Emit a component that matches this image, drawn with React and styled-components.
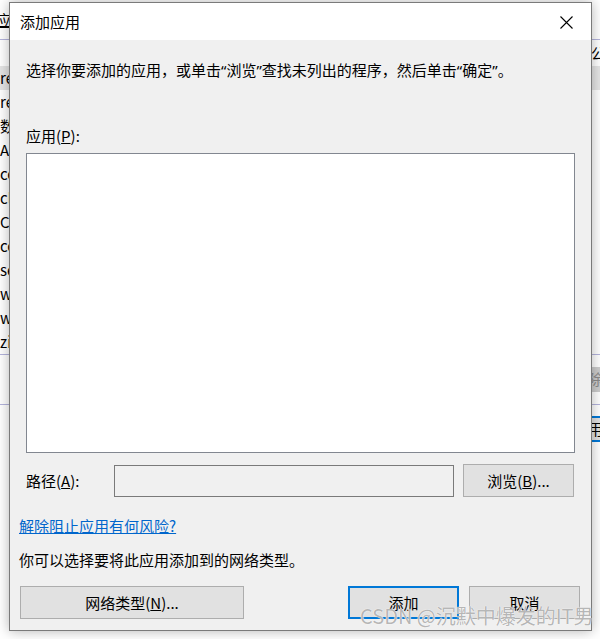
import styled, { createGlobalStyle } from "styled-components";

const GlobalStyle = createGlobalStyle`
  html, body {
    margin: 0;
    padding: 0;
    background: #ffffff;
  }
  body {
    font-family: "Noto Sans CJK SC", "Noto Sans", sans-serif;
    font-size: 15px;
    color: #000;
  }
`;

const backRows = ["re", "re", "数", "A", "co", "cl", "C", "co", "se", "w", "w", "zi"];

const App = () => {
  return (
    <>
      <GlobalStyle />
      <Screen>
        <BackWindow>
          <BackHeader>
            <BackTab>应</BackTab>
          </BackHeader>
          <BackTopRow>
            <BackRightText>公</BackRightText>
          </BackTopRow>
          <BackList>
            {backRows.map((r, i) => (
              <BackRow key={i} $selected={i === 0}>{r}</BackRow>
            ))}
          </BackList>
          <BackSection>
            <BackGrayBtn>除</BackGrayBtn>
          </BackSection>
          <BackFooter>
            <BackBlueBtn>用</BackBlueBtn>
          </BackFooter>
        </BackWindow>

        <Dialog>
          <TitleBar>
            <Title>添加应用</Title>
            <CloseBtn>
              <svg width="13" height="13" viewBox="0 0 13 13">
                <path d="M0.5 0.5 L12.5 12.5 M12.5 0.5 L0.5 12.5" stroke="#000" strokeWidth="1.1" fill="none" />
              </svg>
            </CloseBtn>
          </TitleBar>
          <Body>
            <Instruction>
              选择你要添加的应用，或单击<Quote>“</Quote>浏览<Quote>”</Quote>查找未列出的程序，然后单击<Quote>“</Quote>确定<Quote>”</Quote>。
            </Instruction>
            <FieldLabel>应用(<u>P</u>):</FieldLabel>
            <ListBox />
            <PathRow>
              <PathLabel>路径(<u>A</u>):</PathLabel>
              <PathInput />
              <Button $width={111}>浏览(<u>B</u>)...</Button>
            </PathRow>
            <HelpLink>解除阻止应用有何风险?</HelpLink>
            <Note>你可以选择要将此应用添加到的网络类型。</Note>
            <ButtonRow>
              <Button $width={224}>网络类型(<u>N</u>)...</Button>
              <RightButtons>
                <Button $width={111} $primary>添加</Button>
                <Button $width={111}>取消</Button>
              </RightButtons>
            </ButtonRow>
          </Body>
        </Dialog>

        <Watermark>CSDN @沉默中爆发的IT男</Watermark>
      </Screen>
    </>
  );
};

export default App;

const Screen = styled.div`
  position: relative;
  width: 600px;
  height: 639px;
  overflow: hidden;
  background: #ffffff;
`;

const BackWindow = styled.div`
  display: flex;
  flex-direction: column;
  width: 600px;
  height: 639px;
  background: #ffffff;
  line-height: 24px;
`;

const BackHeader = styled.div`
  height: 40px;
  display: flex;
  align-items: center;
  border-bottom: 1px solid #b4b4dc;
  box-sizing: border-box;
`;

const BackTab = styled.span`
  margin-left: -4px;
  text-decoration: underline;
`;

const BackTopRow = styled.div`
  height: 26px;
  display: flex;
  justify-content: flex-end;
  align-items: center;
`;

const BackRightText = styled.span`
  margin-right: -6px;
`;

const BackList = styled.div`
  display: flex;
  flex-direction: column;
  border-bottom: 1px solid #b4b4dc;
`;

const BackRow = styled.div`
  height: 24px;
  background: ${({ $selected }) => ($selected ? "#e5e5e5" : "transparent")};
`;

const BackSection = styled.div`
  height: 49px;
  display: flex;
  justify-content: flex-end;
  align-items: center;
  border-bottom: 1px solid #b4b4dc;
`;

const BackGrayBtn = styled.div`
  width: 12px;
  height: 25px;
  background: #cccccc;
  color: #8a8a8a;
  overflow: hidden;
  white-space: nowrap;
`;

const BackFooter = styled.div`
  display: flex;
  justify-content: flex-end;
  padding-top: 11px;
`;

const BackBlueBtn = styled.div`
  width: 12px;
  height: 22px;
  line-height: 22px;
  border-top: 2px solid #0078d7;
  border-bottom: 2px solid #0078d7;
  background: #e1e1e1;
  overflow: hidden;
  white-space: nowrap;
`;

const Dialog = styled.div`
  position: absolute;
  left: 9px;
  top: 2px;
  width: 583px;
  height: 629px;
  box-sizing: border-box;
  border: 1px solid #7a7a7a;
  background: #f0f0f0;
  box-shadow: 0 0 12px rgba(0, 0, 0, 0.3);
  display: flex;
  flex-direction: column;
`;

const TitleBar = styled.div`
  height: 37px;
  flex-shrink: 0;
  background: #ffffff;
  display: flex;
  align-items: center;
  justify-content: space-between;
  padding-left: 10px;
`;

const Title = styled.span`
  font-size: 15px;
  line-height: 20px;
`;

const CloseBtn = styled.div`
  width: 44px;
  height: 37px;
  display: flex;
  align-items: center;
  justify-content: center;
  margin-right: 3px;
  margin-top: 1px;
`;

const Body = styled.div`
  flex: 1;
  display: flex;
  flex-direction: column;
  padding: 20px 0 11px;
  font-size: 15px;
  line-height: 20px;
`;

const Instruction = styled.div`
  margin: 0 16px;
  white-space: nowrap;
`;

const Quote = styled.span`
  font-family: "Noto Sans", "Liberation Sans", sans-serif;
`;

const FieldLabel = styled.div`
  margin: 46px 16px 0;
`;

const ListBox = styled.div`
  margin: 7px 16px 0;
  height: 300px;
  box-sizing: border-box;
  border: 1px solid #828790;
  background: #ffffff;
`;

const PathRow = styled.div`
  margin: 11px 16px 0;
  height: 33px;
  display: flex;
  align-items: center;
`;

const PathLabel = styled.span`
  width: 88px;
`;

const PathInput = styled.div`
  width: 340px;
  height: 32px;
  margin-top: 1px;
  margin-right: 9px;
  box-sizing: border-box;
  border: 1px solid #7a7a7a;
  background: #f0f0f0;
`;

const Button = styled.div`
  width: ${({ $width }) => $width}px;
  height: 33px;
  box-sizing: border-box;
  display: flex;
  align-items: center;
  justify-content: center;
  background: #e1e1e1;
  border: ${({ $primary }) => ($primary ? "2px solid #0078d7" : "1px solid #adadad")};
  font-size: 15px;
  white-space: nowrap;
`;

const HelpLink = styled.a`
  margin: 19px 9px 0;
  color: #0066cc;
  text-decoration: underline;
  cursor: pointer;
  align-self: flex-start;
`;

const Note = styled.div`
  margin: 14px 9px 0;
`;

const ButtonRow = styled.div`
  margin: 16px 11px 0 10px;
  display: flex;
  justify-content: space-between;
`;

const RightButtons = styled.div`
  display: flex;
  gap: 10px;
`;

const Watermark = styled.div`
  position: absolute;
  left: 360px;
  top: 603px;
  font-size: 20px;
  line-height: 26px;
  color: rgba(150, 150, 150, 0.7);
  text-shadow: 0 0 1px #fff, 0 0 1px #fff;
  white-space: nowrap;
  pointer-events: none;
`;
